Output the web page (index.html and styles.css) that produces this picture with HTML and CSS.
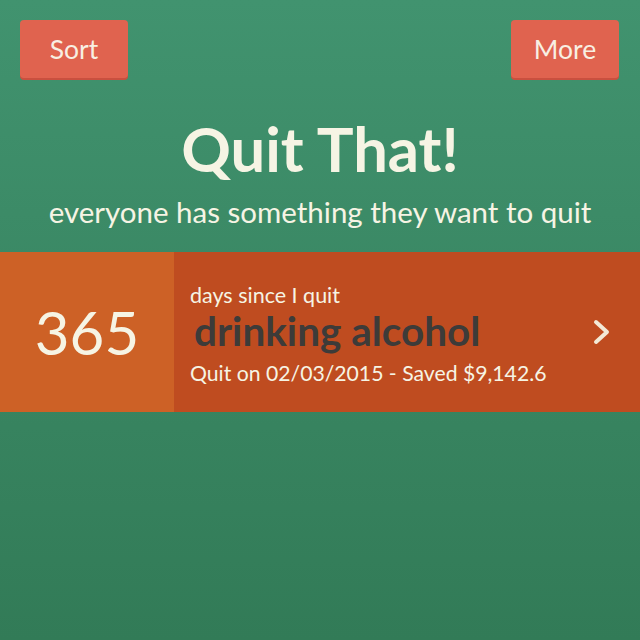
FILE: index.html
```html
<!DOCTYPE html>
<html lang="en">
<head>
    <meta charset="UTF-8">
    <meta name="viewport" content="width=device-width, initial-scale=1.0">
    <title>Quit That!</title>
    <link rel="stylesheet" href="styles.css">
</head>
<body>
    <div class="topbar">
        <button class="btn">Sort</button>
        <button class="btn">More</button>
    </div>

    <div class="header">
        <h1>Quit That!</h1>
        <p class="tagline">everyone has something they want to quit</p>
    </div>

    <div class="habit">
        <div class="habit-days">365</div>
        <div class="habit-info">
            <div class="habit-label">days since I quit</div>
            <div class="habit-name">drinking alcohol</div>
            <div class="habit-meta">Quit on 02/03/2015 - Saved $9,142.6</div>
        </div>
        <svg class="chevron" width="18" height="26" viewBox="0 0 18 26">
            <path d="M3 3 L14 13 L3 23" fill="none" stroke="#f3e9d6" stroke-width="4" stroke-linecap="round" stroke-linejoin="round"/>
        </svg>
    </div>
</body>
</html>
```

FILE: styles.css
```css
html {
    min-height: 100%;
    background: linear-gradient(#41936f, #327b57);
}
body {
    margin: 0;
    font-family: Lato, "Open Sans", sans-serif;
    color: #f6f4e4;
}
.topbar {
    display: flex;
    justify-content: space-between;
    padding: 20px 21px 0 20px;
}
.btn {
    width: 108px;
    height: 58px;
    border: none;
    border-radius: 4px;
    background-color: #e0634f;
    box-shadow: 0 2px 0 #c9503f;
    color: #f8efe2;
    font-family: Lato, sans-serif;
    font-size: 26.5px;
    cursor: pointer;
}
.header {
    text-align: center;
}
h1 {
    margin: 34px 0 0 0;
    font-size: 61.5px;
    font-weight: bold;
    line-height: 72px;
}
.tagline {
    margin: 10px 0 0 0;
    font-size: 29.5px;
    line-height: 36px;
}
.habit {
    display: flex;
    align-items: center;
    height: 160px;
    margin-top: 22px;
    background-color: #bf4c20;
}
.habit-days {
    display: flex;
    align-items: center;
    justify-content: center;
    width: 174px;
    height: 100%;
    background-color: #cd6126;
    font-size: 60px;
}
.habit-info {
    flex: 1;
    padding: 5px 0 0 16px;
}
.habit-label {
    font-size: 21.5px;
    line-height: 26px;
}
.habit-name {
    margin-left: 4px;
    color: #3d3b39;
    font-size: 40.5px;
    font-weight: bold;
    line-height: 46px;
}
.habit-meta {
    margin-top: 5px;
    font-size: 21.2px;
    line-height: 28px;
}
.chevron {
    margin-right: 29px;
}
```
